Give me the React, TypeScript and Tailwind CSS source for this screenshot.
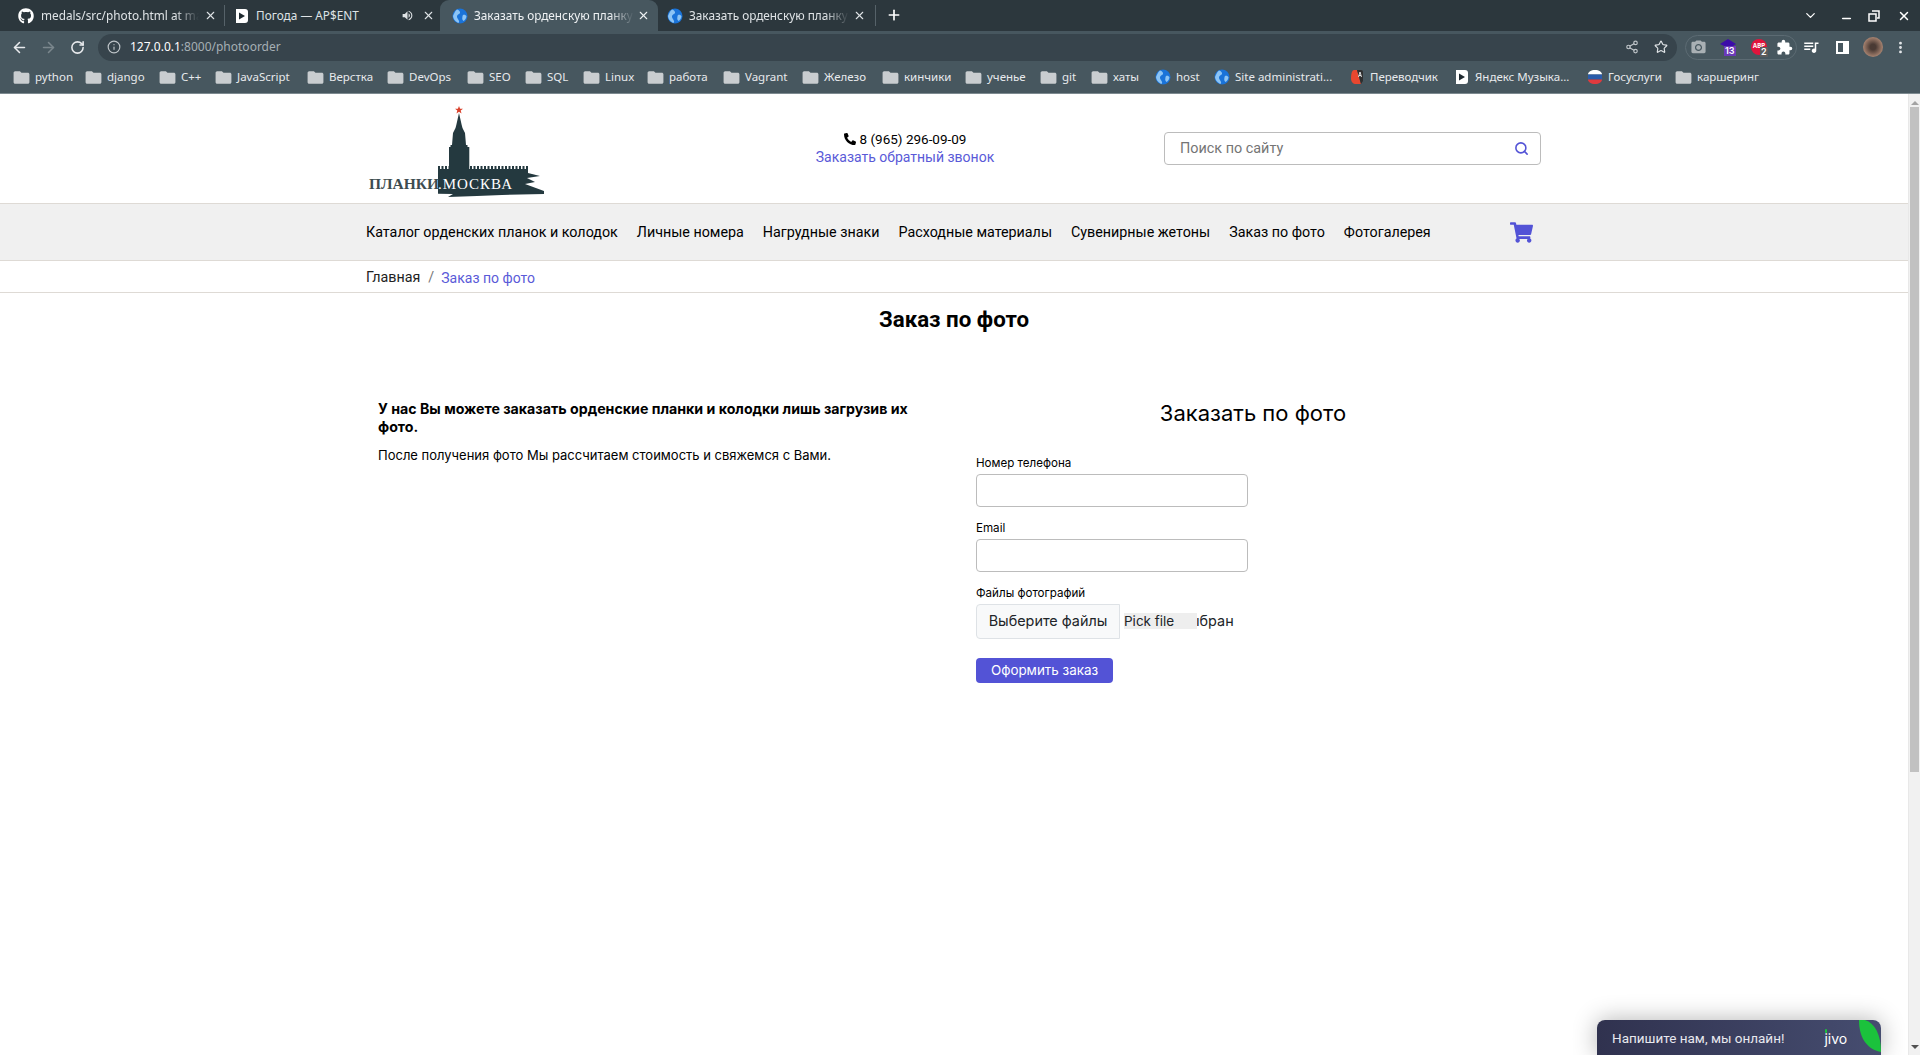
import React from "react";
import { ArrowLeft, ArrowRight, ChevronDown, Info, Minus, MoreVertical, Plus, RotateCw, Search, Share2, Star, X } from "lucide-react";
import { FaGithub, FaPhoneAlt, FaShoppingCart } from "react-icons/fa";
import { MdCameraAlt, MdExtension, MdFolder, MdQueueMusic, MdVolumeUp } from "react-icons/md";

const Globe = () => (
  <svg width="16" height="16" viewBox="0 0 16 16" className="shrink-0">
    <circle cx="8" cy="8" r="7.5" fill="#1a73d9" />
    <path d="M5 1.5c2 .5 3.5 2 3 3.5S5.5 6 5 8s1.500 3 2 5-1 2-1.500 1.500C3 13 1 10.500 1 8c1-2 2-5 4-6.500zM11 7c1.500-.5 3 0 3.500 1.500-.5 2-1.500 3.500-3 4.500-1-1-1.500-2-1.200-3.200.2-.8 0-2 .7-2.800z" fill="#8cc4f5" />
  </svg>
);

const PlayBadge = () => (
  <svg width="16" height="16" viewBox="0 0 16 16" className="shrink-0">
    <path d="M2 1h9a3 3 0 0 1 3 3v8a3 3 0 0 1-3 3H2z" fill="#fff" />
    <path d="M5 4.500l6 3.500-6 3.500z" fill="#1f2a30" />
  </svg>
);

const bookmarks = [
  { label: "python", w: "w-[72px]", icon: "folder" },
  { label: "django", w: "w-[74px]", icon: "folder" },
  { label: "C++", w: "w-[56px]", icon: "folder" },
  { label: "JavaScript", w: "w-[92px]", icon: "folder" },
  { label: "Верстка", w: "w-[80px]", icon: "folder" },
  { label: "DevOps", w: "w-[80px]", icon: "folder" },
  { label: "SEO", w: "w-[58px]", icon: "folder" },
  { label: "SQL", w: "w-[58px]", icon: "folder" },
  { label: "Linux", w: "w-[64px]", icon: "folder" },
  { label: "работа", w: "w-[76px]", icon: "folder" },
  { label: "Vagrant", w: "w-[79px]", icon: "folder" },
  { label: "Железо", w: "w-[80px]", icon: "folder" },
  { label: "кинчики", w: "w-[83px]", icon: "folder" },
  { label: "ученье", w: "w-[75px]", icon: "folder" },
  { label: "git", w: "w-[51px]", icon: "folder" },
  { label: "хаты", w: "w-[63px]", icon: "folder" },
  { label: "host", w: "w-[59px]", icon: "globe" },
  { label: "Site administrati...", w: "w-[135px]", icon: "globe" },
  { label: "Переводчик", w: "w-[105px]", icon: "translate" },
  { label: "Яндекс Музыка...", w: "w-[133px]", icon: "play" },
  { label: "Госуслуги", w: "w-[89px]", icon: "flag" },
  { label: "каршеринг", w: "w-[90px]", icon: "folder" },
];

const BookmarkIcon = ({ icon }: { icon: string }) => {
  if (icon === "globe") return <Globe />;
  if (icon === "play") return <PlayBadge />;
  if (icon === "translate") {
    return (
      <svg width="16" height="16" viewBox="0 0 16 16" className="shrink-0">
        <path d="M5 1h3l4 14H7C4 15 2 13 2 9c0-4 1-8 3-8z" fill="#e8472f" />
        <path d="M8 1h4a2 2 0 0 1 2 2v9l-2 3z" fill="#2f2f2f" />
        <path d="M9.500 8l1.500-5 1.500 5M10 6.500h2" fill="none" stroke="#fff" strokeWidth="0.800" />
      </svg>
    );
  }
  if (icon === "flag") {
    return (
      <svg width="16" height="16" viewBox="0 0 16 16" className="shrink-0">
        <path d="M1 5.500C1 3 4 1 8 1s7 2 7 4.500z" fill="#fff" />
        <path d="M1 5.500h14v5H1z" fill="#2a5caa" />
        <path d="M1 10.500h14C15 13 12 15 8 15s-7-2-7-4.500z" fill="#e03a3e" />
      </svg>
    );
  }
  return <MdFolder size={19} className="-ml-0.5 mr-[-1px] shrink-0 text-[#c9cdd0]" />;
};

const TabStrip = () => (
  <div className="flex h-[31px] items-end bg-[#2c373d] font-['Noto_Sans',sans-serif] text-[11.800px] text-[#dfe3e6]">
    <div className="flex h-[31px] w-[224px] shrink-0 items-center gap-[7px] pl-[18px]">
      <FaGithub size={16} className="shrink-0 text-white" />
      <span className="w-[158px] overflow-hidden whitespace-nowrap [mask-image:linear-gradient(to_right,black_85%,transparent)]">
        medals/src/photo.html at main
      </span>
      <X size={13} className="-ml-[2px] shrink-0" />
    </div>
    <div className="mb-[5px] h-[21px] w-px shrink-0 bg-[#566269]" />
    <div className="flex h-[31px] w-[215px] shrink-0 items-center pl-[9px]">
      <PlayBadge />
      <span className="ml-[6px] w-[145px] whitespace-nowrap">Погода — AP$ENT</span>
      <MdVolumeUp size={13} className="shrink-0" />
      <X size={13} className="ml-[8px] shrink-0" />
    </div>
    <div className="flex h-[31px] w-[218px] shrink-0 items-center rounded-t-[9px] bg-[#47575f] pl-[12px] text-[#eef1f3]">
      <Globe />
      <span className="ml-[6px] w-[160px] overflow-hidden whitespace-nowrap [mask-image:linear-gradient(to_right,black_85%,transparent)]">
        Заказать орденскую планку
      </span>
      <X size={13} className="ml-[3px] shrink-0" />
    </div>
    <div className="flex h-[31px] w-[217px] shrink-0 items-center pl-[9px]">
      <Globe />
      <span className="ml-[6px] w-[160px] overflow-hidden whitespace-nowrap [mask-image:linear-gradient(to_right,black_85%,transparent)]">
        Заказать орденскую планку
      </span>
      <X size={13} className="ml-[4px] shrink-0" />
    </div>
    <div className="mb-[5px] h-[21px] w-px shrink-0 bg-[#566269]" />
    <Plus size={16} strokeWidth={2.5} className="mb-[8px] ml-[10px] shrink-0 text-white" />
    <div className="ml-auto flex h-[31px] items-center pr-[9px] text-white">
      <ChevronDown size={15} />
      <Minus size={13} strokeWidth={3} className="ml-[22px] mt-[5px]" />
      <svg width="12" height="12" viewBox="0 0 12 12" className="ml-[15px]" fill="none" stroke="#fff" strokeWidth="1.500">
        <path d="M4 1h7v7H9M1 4h7v7H1z" />
      </svg>
      <X size={14} strokeWidth={2.5} className="ml-[17px]" />
    </div>
  </div>
);

const Toolbar = () => (
  <div className="flex h-[30px] items-center bg-[#47575f] pt-[2px] text-[#e8eaed]">
    <ArrowLeft size={17} strokeWidth={2.2} className="ml-[11px] shrink-0" />
    <ArrowRight size={17} strokeWidth={2.2} className="ml-[12px] shrink-0 text-[#7b878d]" />
    <RotateCw size={15} strokeWidth={2.5} className="ml-[13px] shrink-0" />
    <div className="ml-[13px] flex h-[27px] w-[1579px] shrink-0 items-center rounded-full bg-[#37444c] pl-[9px] font-['Noto_Sans',sans-serif] text-[12px]">
      <Info size={14} className="shrink-0 text-[#bfc5c9]" />
      <span className="ml-[9px] text-white">127.0.0.1</span>
      <span className="text-[#a6afb4]">:8000/photoorder</span>
      <Share2 size={14} className="ml-auto shrink-0 text-[#bfc5c9]" />
      <Star size={14} className="ml-[15px] mr-[9px] shrink-0 text-[#dfe3e6]" />
    </div>
    <div className="ml-[8px] flex h-[25px] w-[112px] shrink-0 items-center rounded-full border border-[#5c6b73] pl-[4px]">
      <MdCameraAlt size={17} className="shrink-0 text-[#a9b0b4]" />
      <span className="relative ml-[13px] h-[16px] w-[17px] shrink-0">
        <svg width="16" height="14" viewBox="0 0 16 14">
          <path d="M8 0l8 5-3 2v4H4V7L0 5z" fill="#3c0ca8" />
        </svg>
        <span className="absolute left-[4px] top-[7px] bg-[#6a3ab8] px-[1px] text-[9px] leading-[10px] font-semibold text-white">13</span>
      </span>
      <span className="relative ml-[14px] h-[16px] w-[16px] shrink-0 rounded-full bg-[#e0143c] text-center text-[6px] leading-[13px] font-bold text-white">
        ABP
        <span className="absolute left-[9px] top-[8px] bg-[#5b5b5b] px-[1px] text-[9px] leading-[10px] font-semibold text-white">2</span>
      </span>
      <MdExtension size={17} className="ml-[9px] shrink-0 text-white" />
    </div>
    <MdQueueMusic size={18} className="ml-[5px] shrink-0 text-white" />
    <div className="ml-[16px] flex h-[13px] w-[13px] shrink-0 justify-end border-2 border-white">
      <div className="h-full w-[4px] bg-white" />
    </div>
    <div className="ml-[14px] h-[20px] w-[20px] shrink-0 rounded-full bg-[radial-gradient(circle,#4a3a34_20%,#b08a76_75%)]" />
    <MoreVertical size={15} strokeWidth={2.5} className="ml-[10px] shrink-0" />
  </div>
);

const BookmarkBar = () => (
  <div className="flex h-[33px] items-center border-b border-[#7d8a90] bg-[#47575f] pl-[14px] font-['Noto_Sans',sans-serif] text-[11.500px] text-[#e8eaed]">
    {bookmarks.map((b) => (
      <div key={b.label} className={`flex shrink-0 items-center gap-[5px] ${b.w}`}>
        <BookmarkIcon icon={b.icon} />
        <span className="whitespace-nowrap">{b.label}</span>
      </div>
    ))}
  </div>
);

// kremlin wall with spasskaya tower, brush strokes on the right end
const Logo = () => (
  <div className="relative h-[96px] w-[180px] shrink-0">
    <svg width="180" height="96" viewBox="0 0 180 96" className="absolute left-0 top-0">
      <path d="M92 3l1.100 2.700 2.900.100-2.300 1.800.800 2.800-2.500-1.600-2.500 1.600.800-2.800-2.300-1.800 2.900-.100z" fill="#d9412b" />
      <path
        d="M92 10L94.700 22L95.500 25L98 30L99 42H100.500V44H102.300V66H161L161 70L173 73L160 75L168 79L158 81L177 88L177 91L135 92L110 93L81 94L86 91L71 90.700V66H82V44H83.500V42H85L86 30L88.500 25L89.300 22z"
        fill="#24393f"
      />
      <path d="M103 65H161M71 65H82" stroke="#24393f" strokeWidth="4" strokeDasharray="2 1.500" fill="none" />
    </svg>
    <span className="absolute left-[2px] top-[71px] whitespace-nowrap font-['Liberation_Serif',serif] text-[15.500px] leading-[20px] font-bold text-[#3d4c50]">
      ПЛАНКИ
    </span>
    <span className="absolute left-[71px] top-[71px] whitespace-nowrap font-['Liberation_Serif',serif] text-[15px] leading-[20px] tracking-[1px] text-white">
      .МОСКВА
    </span>
  </div>
);

const navItems = [
  "Каталог орденских планок и колодок",
  "Личные номера",
  "Нагрудные знаки",
  "Расходные материалы",
  "Сувенирные жетоны",
  "Заказ по фото",
  "Фотогалерея",
];

const SiteHeader = () => (
  <>
    <header className="mx-auto flex h-[109px] w-[1174px] font-['Roboto',sans-serif]">
      <div className="pt-[9px]">
        <Logo />
      </div>
      <div className="ml-[258px] flex w-[200px] shrink-0 flex-col items-center pt-[36px] text-[14px] leading-[18px]">
        <div className="flex items-center gap-[4px] text-[13.500px] text-black">
          <FaPhoneAlt size={12} />
          <span>8 (965) 296-09-09</span>
        </div>
        <a className="whitespace-nowrap text-[#5a5ad8]">Заказать обратный звонок</a>
      </div>
      <div className="ml-[159px] mt-[38px] flex h-[33px] w-[377px] shrink-0 items-center rounded-[4px] border border-[#bcbcbc] pl-[15px] pr-[11px] text-[14.400px] text-[#757575]">
        <span>Поиск по сайту</span>
        <Search size={15} strokeWidth={2.5} className="ml-auto text-[#5353d6]" />
      </div>
    </header>
    <nav className="h-[58px] border-y border-[#dedad5] bg-[#f0f0f0] font-['Roboto',sans-serif] text-[14.300px] text-black">
      <div className="mx-auto flex h-full w-[1176px] items-center gap-[19px] pt-[2px]">
        {navItems.map((item) => (
          <a key={item} className="whitespace-nowrap">
            {item}
          </a>
        ))}
        <FaShoppingCart size={23} className="mb-[2px] ml-[60px] shrink-0 text-[#5353d6]" />
      </div>
    </nav>
    <div className="h-[32px] border-b border-[#dedad5] font-['Roboto',sans-serif] text-[14.300px]">
      <div className="mx-auto flex h-full w-[1176px] items-center pt-[3px] text-[#222]">
        <span>Главная</span>
        <span className="ml-[8px] text-[#777]">/</span>
        <span className="ml-[7px] text-[14px] text-[#5a5ad8]">Заказ по фото</span>
      </div>
    </div>
  </>
);

const FieldLabel = ({ children }: { children: React.ReactNode }) => (
  <label className="block text-[11.600px] leading-[16px] text-black">{children}</label>
);

const OrderForm = () => (
  <div className="ml-[67px] w-[554px] shrink-0 pt-[3px]">
    <h2 className="text-center text-[22px] leading-[28px] text-black">Заказать по фото</h2>
    <div className="mt-[28px]">
      <FieldLabel>Номер телефона</FieldLabel>
      <div className="mt-[3px] h-[33px] w-[272px] rounded-[4px] border border-[#bcbcbc]" />
    </div>
    <div className="mt-[13px]">
      <FieldLabel>Email</FieldLabel>
      <div className="mt-[3px] h-[33px] w-[272px] rounded-[4px] border border-[#bcbcbc]" />
    </div>
    <div className="mt-[13px]">
      <FieldLabel>Файлы фотографий</FieldLabel>
      <div className="mt-[3px] flex h-[35px] items-center text-[#212529]">
        <div className="flex h-full w-[144px] items-center justify-center rounded-l-[4px] border border-[#dee2e6] bg-[#f8f9fa] pb-[1px] text-[14.400px]">
          Выберите файлы
        </div>
        <div className="relative mb-[2px] ml-[4px] h-[16px] w-[107px] whitespace-nowrap pl-[65px] text-[14.400px] leading-[16px]">
          <span>ыбран</span>
          <span className="absolute left-0 top-0 h-[16px] w-[73px] bg-[#eeeeee] text-[13.500px] leading-[16px]">Pick file</span>
        </div>
      </div>
    </div>
    <button className="mt-[19px] block h-[25px] w-[137px] rounded-[4px] bg-[#5353d6] text-[13.400px] leading-[25px] text-white">
      Оформить заказ
    </button>
  </div>
);

export default function App() {
  return (
    <div className="relative flex h-screen flex-col overflow-hidden bg-white font-['Inter',sans-serif]">
      <TabStrip />
      <Toolbar />
      <BookmarkBar />
      <div className="flex min-h-0 flex-1">
        <main className="min-w-0 flex-1">
          <SiteHeader />
          <h1 className="mt-[13px] text-center font-['Roboto',sans-serif] text-[22.300px] leading-[26px] font-bold text-black">Заказ по фото</h1>
          <div className="mx-auto mt-[64px] flex w-[1174px]">
            <div className="ml-[11px] w-[531px] shrink-0 pt-[4px]">
              <p className="text-[14.200px] leading-[18px] font-bold text-black">
                У нас Вы можете заказать орденские планки и колодки лишь загрузив их фото.
              </p>
              <p className="mt-[10px] text-[13px] leading-[18px] text-black">После получения фото Мы рассчитаем стоимость и свяжемся с Вами.</p>
            </div>
            <OrderForm />
          </div>
        </main>
        <div className="flex w-[12px] shrink-0 flex-col items-center border-l border-[#e8e8e8] bg-[#f1f1f1]">
          <div className="mt-[7px] h-0 w-0 border-x-[4px] border-b-[4px] border-x-transparent border-b-[#a3a3a3]" />
          <div className="mt-[2px] h-[665px] w-[9px] bg-[#c1c1c1]" />
          <div className="mb-[6px] mt-auto h-0 w-0 border-x-[4px] border-t-[4px] border-x-transparent border-t-[#505050]" />
        </div>
      </div>
      <div className="absolute bottom-0 left-[1597px] flex h-[35px] w-[284px] items-center overflow-hidden rounded-t-[8px] bg-gradient-to-r from-[#30324f] to-[#464d70] pl-[15px] font-['Roboto',sans-serif] text-[13.500px] text-[#e8e8ee] shadow-[0_0_24px_rgba(0,0,0,0.3)]">
        <span className="pt-[1px]">Напишите нам, мы онлайн!</span>
        <span className="relative ml-[40px] pt-[1px] font-['Inter',sans-serif] text-[14px] text-white">
          jivo
          <span className="absolute left-[1px] top-[2px] h-[4px] w-[2px] rounded-full bg-[#1bc23c]" />
        </span>
        <svg width="22" height="32" viewBox="0 0 22 32" className="absolute right-0 top-0">
          <path d="M0 0h6c10 3 16 15 16 32C10 30 0 20 0 0z" fill="#1bc23c" />
        </svg>
      </div>
    </div>
  );
}
